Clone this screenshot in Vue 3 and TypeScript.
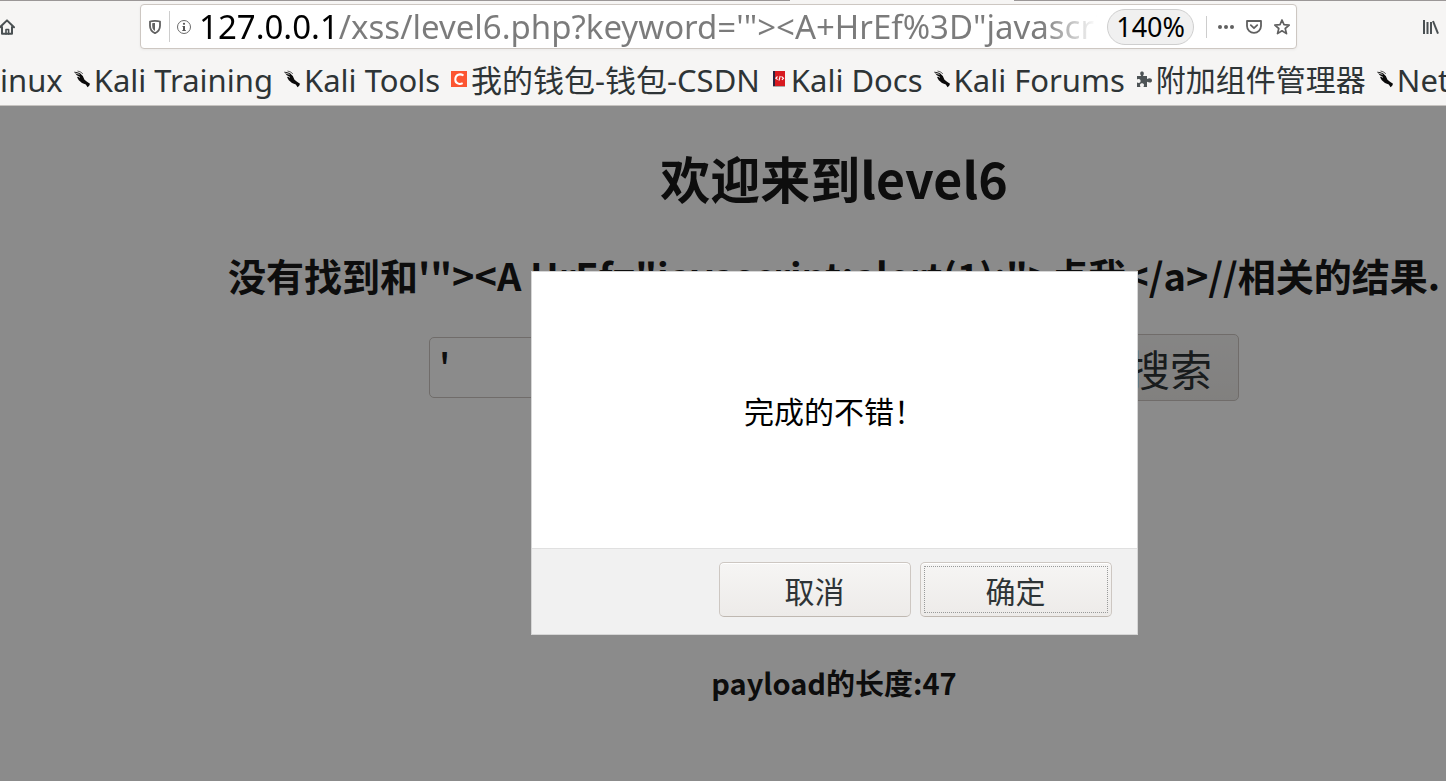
<script setup lang="ts">
import { ref } from 'vue'

type BookmarkIcon = 'none' | 'dragon' | 'csdn' | 'docs' | 'puzzle'

interface Bookmark {
  label: string
  icon: BookmarkIcon
}

const bookmarks: Bookmark[] = [
  { label: 'inux', icon: 'none' },
  { label: 'Kali Training', icon: 'dragon' },
  { label: 'Kali Tools', icon: 'dragon' },
  { label: '我的钱包-钱包-CSDN', icon: 'csdn' },
  { label: 'Kali Docs', icon: 'docs' },
  { label: 'Kali Forums', icon: 'dragon' },
  { label: '附加组件管理器', icon: 'puzzle' },
  { label: 'Net', icon: 'dragon' },
]

const address = ref(`127.0.0.1/xss/level6.php?keyword='"><A+HrEf%3D"javascript`)
const keyword = ref("'")
const resultText = `没有找到和'"><A HrEf="javascript:alert(1);">点我</a>//相关的结果.`
</script>

<template>
  <div class="browser">
    <header class="chrome">
      <div class="tab-edge"><i></i><i class="active"></i><i></i></div>
      <div class="toolbar">
        <button class="icon-btn home" aria-label="主页">
          <svg width="16" height="16" viewBox="0 0 16 16" fill="none" stroke="#4a5052" stroke-width="2" stroke-linecap="round" stroke-linejoin="round">
            <path d="M1 8.2 8 1.4l7 6.8M3 8v6.8h10V8" />
            <path d="M7 15v-4.5h2.6V15" stroke-width="1.6" />
          </svg>
        </button>
        <div class="urlbar">
          <button class="icon-btn shield" aria-label="跟踪保护">
            <svg width="14" height="16" viewBox="0 0 14 16">
              <path d="M7 1.8c2 0 3.8.3 5 .7v4.2c0 3.8-2 6-5 7.500C4 12.700 2 10.500 2 6.700V2.500c1.200-.4 3-.7 5-.7z" fill="none" stroke="#606060" stroke-width="1.800" stroke-linejoin="round" />
              <path d="M7 4v8C5 10.800 4.200 9.200 4.200 6.700V4.300C5 4.100 6 4 7 4z" fill="#606060" />
            </svg>
          </button>
          <span class="rule"></span>
          <button class="icon-btn info" aria-label="站点信息">
            <svg width="16" height="16" viewBox="0 0 16 16">
              <circle cx="8" cy="8" r="6.500" fill="none" stroke="#6a6a6a" />
              <circle cx="8" cy="4.800" r="1.100" fill="#555" />
              <path d="M6.500 7H9v4h.8v1H6.300v-1H7V8h-.5z" fill="#555" />
            </svg>
          </button>
          <input v-model="address" class="address" type="text" aria-label="地址" spellcheck="false" />
          <button class="zoom">140%</button>
          <span class="rule short"></span>
          <button class="icon-btn" aria-label="页面操作">
            <svg width="18" height="18" viewBox="0 0 18 18" fill="#606060">
              <circle cx="3" cy="9" r="2" /><circle cx="9" cy="9" r="2" /><circle cx="15" cy="9" r="2" />
            </svg>
          </button>
          <button class="icon-btn" aria-label="保存到 Pocket">
            <svg width="18" height="18" viewBox="0 0 18 18" fill="none" stroke="#606060" stroke-width="1.800" stroke-linecap="round" stroke-linejoin="round">
              <path d="M2 3h14v5a7 6.800 0 0 1-14 0z" /><path d="m5.800 7.200 3.200 3 3.200-3" />
            </svg>
          </button>
          <button class="icon-btn" aria-label="收藏">
            <svg width="18" height="18" viewBox="0 0 18 18" fill="none" stroke="#606060" stroke-width="1.700" stroke-linejoin="round">
              <path d="m9 2 2 4.700 5.200.4-4 3.400 1.300 5.100L9 12.800l-4.500 2.800 1.300-5.100-4-3.400L7 6.700z" />
            </svg>
          </button>
        </div>
        <button class="icon-btn library" aria-label="我的足迹">
          <svg width="18" height="16" viewBox="0 0 18 16" fill="none" stroke="#4a5052" stroke-width="2">
            <path d="M3 1v14M6.500 3v12M10 3v12" /><path d="m12 2 5 12.600" />
          </svg>
        </button>
      </div>
      <nav class="bookmarks">
        <a v-for="item in bookmarks" :key="item.label" href="#" class="bookmark" :class="item.icon">
          <svg v-if="item.icon === 'dragon'" width="16" height="18" viewBox="0 0 16 18">
            <path d="M0 1.800 2.500 2 6 3.200 8.800 6 10.500 9.800 13 11.800 16 13.800 15.200 15.800 13.600 17.200 11.800 14.600 8 13 4.800 10.300 3 7.200 4.200 7z" fill="#0a0a0a" />
            <path d="M1.200 3 5.600 4.400M2.600 5.600 6 7.400" stroke="#f6f5f4" fill="none" stroke-width=".8" />
            <path d="m3.500 1 3.300 1 2 2" stroke="#333" fill="none" stroke-width=".8" />
          </svg>
          <svg v-else-if="item.icon === 'csdn'" width="16" height="16" viewBox="0 0 16 16">
            <path d="M0 0h16v16H0z" fill="#fc5531" />
            <path d="M12.500 4.500C9 2.200 4.500 3.600 4.300 8.200c-.2 4.200 4 5.800 7.400 4" fill="none" stroke="#fff" stroke-width="2" />
          </svg>
          <svg v-else-if="item.icon === 'docs'" width="16" height="16" viewBox="0 0 16 16">
            <path d="M2 0h12v15H2z" fill="#d71a20" /><path d="M2 0h2v15H2z" fill="#2a2540" />
            <path d="M2 15h12v1H2z" fill="#aaa" />
            <path d="M6.500 5.500 4.800 7.200l1.800 1.500M10.500 5.500l2 1.700-1.600 1.700M9.200 5 8 9.600" fill="none" stroke="#fff" stroke-width="1.100" />
          </svg>
          <svg v-else-if="item.icon === 'puzzle'" width="16" height="16" viewBox="0 0 16 16">
            <path d="M1 5h4.200C3.500 2.400 4.200.5 6 .5s2.600 1.900 1 4.500h4v3c2.500-1.300 5-.8 5 1.500s-2.500 2.700-5 1.300V16H7.500c1.300-3-.2-3.800-1.500-3.800S3.300 13 4.500 16H1v-4.500c2.300 1 3.600.2 3.600-1.500S3.300 7.500 1 8.500z" fill="#4d5355" />
          </svg>
          <span>{{ item.label }}</span>
        </a>
      </nav>
    </header>

    <main class="page">
      <h1>欢迎来到level6</h1>
      <h2>{{ resultText }}</h2>
      <form class="search" @submit.prevent>
        <input v-model="keyword" type="text" aria-label="keyword" />
        <button type="submit">搜索</button>
      </form>
      <h3>payload的长度:47</h3>
      <div class="shade">
        <section class="dialog" role="dialog" aria-labelledby="message">
          <p id="message">完成的不错！</p>
          <footer>
            <button>取消</button>
            <button class="focused">确定</button>
          </footer>
        </section>
      </div>
    </main>
  </div>
</template>

<style>
body {
  margin: 0;
}
</style>

<style scoped>
* {
  box-sizing: border-box;
}
.browser {
  min-height: 100vh;
  display: flex;
  flex-direction: column;
  overflow: hidden;
  font-family: 'Noto Sans', 'Noto Sans CJK SC', sans-serif;
  color: #2e3436;
}
button,
input {
  font-family: inherit;
  margin: 0;
}
svg {
  display: block;
  flex: none;
}
.chrome {
  background: #f6f5f4;
  border-bottom: 1px solid #c6c3c0;
}
.tab-edge {
  display: grid;
  grid-template-columns: 790fr 224fr 432fr;
  height: 1px;
}
.tab-edge i {
  background: #9b9797;
}
.tab-edge .active {
  background: #f6f5f4;
}
.toolbar {
  display: flex;
  align-items: center;
  height: 51px;
  padding-right: 7px;
}
.icon-btn {
  display: flex;
  padding: 0;
  border: 0;
  background: none;
}
.home {
  width: 140px;
  margin-left: -1px;
  margin-right: 1px;
}
.urlbar {
  flex: 1;
  min-width: 0;
  display: flex;
  align-items: center;
  gap: 10px;
  height: 45px;
  padding: 0 5px 0 7px;
  background: #fff;
  border: 1px solid #cdc7c2;
  border-radius: 4px;
  box-shadow: 0 1px 3px #0000000d;
}
.shield,
.info {
  margin-right: -3px;
}
.rule {
  width: 1px;
  height: 31px;
  margin-right: -4px;
  background: #cdcdcd;
}
.rule.short {
  height: 22px;
  margin: 0 0 0 2px;
}
.address {
  flex: 1;
  min-width: 0;
  height: 43px;
  padding: 0;
  margin-right: -4px;
  border: 0;
  outline: 0;
  font-size: 33px;
  color: transparent;
  background: linear-gradient(to right, #000 137px, #7b7b7b 137px, #7b7b7b calc(100% - 60px), transparent calc(100% - 4px));
  background-clip: text;
  -webkit-background-clip: text;
}
.zoom {
  height: 36px;
  padding: 0 8px;
  border: 1px solid #cfcfcf;
  border-radius: 18px;
  background: #f0f0f0;
  color: #000;
  font-size: 27px;
  line-height: 32px;
}
.library {
  margin-left: 124px;
}
.bookmarks {
  display: flex;
  align-items: center;
  gap: 11px;
  height: 53px;
  overflow: hidden;
}
.bookmark {
  display: flex;
  flex: none;
  align-items: center;
  gap: 4px;
  color: #2e3436;
  text-decoration: none;
  font-size: 31px;
  line-height: 44px;
  white-space: nowrap;
}
.bookmark.puzzle {
  font-size: 30px;
}
.bookmark span {
  padding-top: 2px;
}
.page {
  position: relative;
  flex: 1;
  display: flex;
  flex-direction: column;
  align-items: center;
  padding-left: 222px;
  background: #fff;
  color: #1a1a1a;
  font-family: 'Noto Sans CJK SC', sans-serif;
}
h1,
h2,
h3 {
  margin: 0;
  font-weight: 700;
  white-space: nowrap;
  color: #181818;
}
h1 {
  margin-top: 34px;
  font-size: 50px;
  line-height: 74px;
}
h2 {
  margin-top: 34px;
  font-size: 38px;
  line-height: 54px;
}
h3 {
  margin-top: 260px;
  font-size: 29px;
  line-height: 42px;
}
.search {
  display: flex;
  align-items: center;
  gap: 10px;
  width: 810px;
  margin-top: 32px;
}
.search input {
  flex: 1;
  min-width: 0;
  height: 61px;
  padding: 0 9px 6px;
  border: 1px solid #cdc7c2;
  border-radius: 5px;
  background: #fff;
  color: #1a1a1a;
  font-size: 38px;
  font-weight: 500;
}
.search button {
  height: 67px;
  padding: 0 26px;
  border: 1px solid #cdc7c2;
  border-radius: 5px;
  background: linear-gradient(#f6f5f4, #edebe9);
  color: #2e3436;
  font-size: 42px;
  line-height: 62px;
}
.shade {
  position: absolute;
  inset: 0;
  display: flex;
  justify-content: center;
  align-items: flex-start;
  padding: 165px 0 0 222px;
  background: #00000074;
}
.dialog {
  width: 607px;
  background: #fff;
  border: 1px solid #d6d6d6;
  color: #000;
}
.dialog p {
  display: flex;
  align-items: center;
  justify-content: center;
  height: 276px;
  margin: 0;
  font-size: 30px;
  line-height: 44px;
}
.dialog footer {
  display: flex;
  justify-content: flex-end;
  gap: 9px;
  padding: 13px 25px 17px;
  border-top: 1px solid #e0e0e0;
  background: #f1f1f1;
}
.dialog button {
  width: 192px;
  height: 55px;
  padding: 0;
  border: 1px solid #cdc7c2;
  border-bottom-color: #bfb8b1;
  border-radius: 5px;
  background: linear-gradient(#f6f5f4, #edebe9);
  box-shadow: inset 0 1px #fff;
  color: #2e3436;
  font-size: 30px;
  line-height: 44px;
}
.dialog .focused {
  outline: 1px dotted #989a9a;
  outline-offset: -5px;
}
</style>
